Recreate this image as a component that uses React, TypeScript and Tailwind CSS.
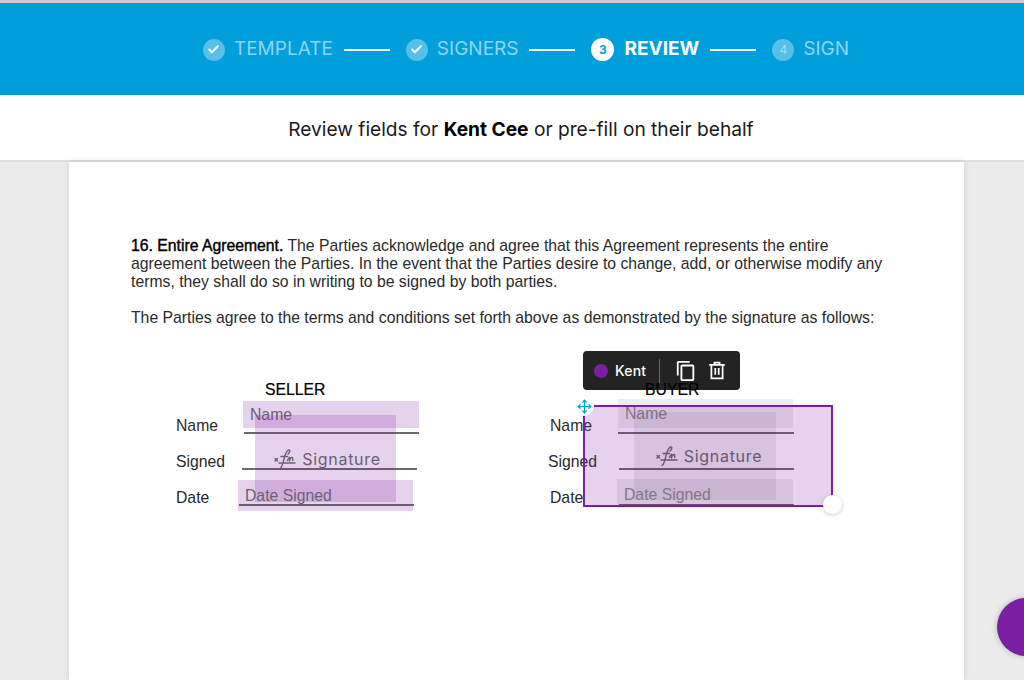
import React from 'react';
import { Check, Move } from 'lucide-react';
import { MdOutlineContentCopy } from 'react-icons/md';

const SignatureMark: React.FC<{ className?: string }> = ({ className }) => (
    <svg className={className} viewBox="0 0 22 20" fill="none" stroke="currentColor" strokeWidth="1.4" strokeLinecap="round">
        <path d="M1 9.500l2.500 2.500M3.500 9.500L1 12" />
        <path d="M6 19.500c2-1 2.500-4 4-9.500 1-4 2.500-9 5-9 1.500 0 1 2-1 4" />
        <path d="M7 7.500h6.500" />
        <path d="M13.500 11.500c.8-2 1.800-3.500 2.300-3 .5.500-.5 2.500-.3 3 .8-2 2-3.500 3-3 .7.500-.2 2.500.3 3" />
        <path d="M5 14h16" />
    </svg>
);

const BinIcon: React.FC<{ className?: string }> = ({ className }) => (
    <svg className={className} viewBox="0 0 20 22" fill="none" stroke="currentColor" strokeWidth="2">
        <path d="M1 4.500h18M7 4.500V2h6v2.500" />
        <path d="M3.500 4.500V20h13V4.500" />
        <path d="M8 8v8M12 8v8" />
    </svg>
);

interface StepProps {
    label: string;
    number?: number;
    done?: boolean;
    active?: boolean;
}

const Step: React.FC<StepProps> = ({ label, number, done, active }) => (
    <div className="flex items-center">
        {active ? (
            <span className="flex h-[23px] w-[23px] items-center justify-center rounded-full bg-white text-[12px] font-bold text-[#009fdb]">{number}</span>
        ) : (
            <span className="flex h-[22px] w-[22px] items-center justify-center rounded-full bg-[#58bfe8] text-[12px] text-[#a5def3]">
                {done ? <Check size={13} strokeWidth={3.5} className="text-white" /> : number}
            </span>
        )}
        <span className={active ? 'ml-[10px] text-[19px] font-bold text-white' : 'ml-[9px] text-[19px] text-[#8fd4ef]'}>{label}</span>
    </div>
);

const StepLine = () => <span className="ml-[11px] mr-[16px] h-[2px] w-[46px] bg-white" />;

const App: React.FC = () => {
    return (
        <div className="relative flex h-[680px] w-[1024px] flex-col overflow-hidden bg-[#ececec] font-['Inter',sans-serif]">
            <header className="flex h-[95px] shrink-0 items-center justify-center border-t-[3px] border-[#c9cdd0] bg-[#009fdb] pl-[28px] pt-[1px]">
                <Step label="TEMPLATE" done />
                <StepLine />
                <Step label="SIGNERS" done />
                <StepLine />
                <Step label="REVIEW" number={3} active />
                <StepLine />
                <Step label="SIGN" number={4} />
            </header>
            <div className="flex h-[67px] shrink-0 items-center justify-center border-b-2 border-[#dedede] bg-white pl-[18px] pt-[3px] text-[19.15px] text-[#1a1a1a]">
                <p>Review fields for <b className="font-bold text-black">Kent Cee</b> or pre-fill on their behalf</p>
            </div>

            <main className="ml-[69px] w-[895px] grow bg-white pl-[62px] pr-[80px] pt-[75px] font-['Liberation_Sans',sans-serif] text-[15.75px] leading-[18px] text-[#2a2a2a] shadow-[0_0_6px_rgba(0,0,0,0.12)]">
                <p>
                    <span className="text-black [-webkit-text-stroke:0.4px]">16. Entire Agreement.</span> The Parties acknowledge and agree that this Agreement represents the entire
                    agreement between the Parties. In the event that the Parties desire to change, add, or otherwise modify any
                    terms, they shall do so in writing to be signed by both parties.
                </p>
                <p className="mt-[18px] whitespace-nowrap">The Parties agree to the terms and conditions set forth above as demonstrated by the signature as follows:</p>

                <section className="ml-[45px] mt-[54px] flex">
                    {/* seller */}
                    <div className="relative w-[372px]">
                        <h3 className="ml-[89px] whitespace-nowrap text-black [-webkit-text-stroke:0.2px]">SELLER</h3>
                        <div className="flex h-[35px] items-end">
                            <span className="-mb-[1px] w-[68px]">Name</span>
                            <span className="h-[2px] w-[175px] bg-[#6a6a6a]" />
                        </div>
                        <div className="flex h-[36px] items-end">
                            <span className="-mb-[1px] w-[66px]">Signed</span>
                            <span className="h-[2px] w-[175px] bg-[#6a6a6a]" />
                        </div>
                        <div className="flex h-[36px] items-end">
                            <span className="-mb-[1px] w-[63px]">Date</span>
                            <span className="h-[2px] w-[175px] bg-[#6a6a6a]" />
                        </div>

                        <div className="absolute left-[67px] top-[20px] h-[27px] w-[176px] bg-[#7b1fa2]/20 pl-[7px] pt-[5px] text-[#6d5f73]">Name</div>
                        <div className="absolute left-[79px] top-[34px] flex h-[87px] w-[141px] items-center justify-center gap-[6px] bg-[#7b1fa2]/20 pl-[4px] pt-[1px] text-[#6d5f73]">
                            <SignatureMark className="h-[20px] w-[22px]" />
                            <span className="font-['Inter',sans-serif] text-[16px] tracking-[0.7px]">Signature</span>
                        </div>
                        <div className="absolute left-[62px] top-[99px] h-[31px] w-[175px] bg-[#7b1fa2]/20 pl-[7px] pt-[7px] text-[#6d5f73]">Date Signed</div>
                    </div>

                    {/* buyer */}
                    <div className="relative w-[300px]">
                        <div className="absolute left-[35px] top-[-30px] flex h-[39px] w-[157px] items-center rounded-[4px] bg-[#232323] pl-[11px] font-['Inter',sans-serif] text-[14px] text-white">
                            <span className="h-[14px] w-[14px] rounded-full bg-[#7b1fa2]" />
                            <span className="ml-[7px] w-[44px] font-medium tracking-[0.2px]">Kent</span>
                            <span className="h-[24px] w-[1px] bg-[#666]" />
                            <MdOutlineContentCopy size={22} className="ml-[15px]" />
                            <BinIcon className="ml-[11px] h-[19px] w-[18px]" />
                        </div>
                        <h3 className="relative ml-[97px] whitespace-nowrap text-black [-webkit-text-stroke:0.2px]">BUYER</h3>
                        <div className="ml-[2px] flex h-[35px] items-end">
                            <span className="-mb-[1px] w-[68px]">Name</span>
                            <span className="h-[2px] w-[176px] bg-[#6a6a6a]" />
                        </div>
                        <div className="flex h-[36px] items-end">
                            <span className="-mb-[1px] w-[71px]">Signed</span>
                            <span className="h-[2px] w-[175px] bg-[#6a6a6a]" />
                        </div>
                        <div className="ml-[2px] flex h-[36px] items-end">
                            <span className="-mb-[1px] w-[69px]">Date</span>
                            <span className="h-[2px] w-[175px] bg-[#6a6a6a]" />
                        </div>

                        <div className="absolute left-[70px] top-[18px] h-[29px] w-[175px] bg-black/[0.07] pl-[7px] pt-[6px] text-[#8a8a8a]">Name</div>
                        <div className="absolute left-[86px] top-[31px] flex h-[88px] w-[142px] items-center justify-center gap-[6px] bg-black/[0.07] pl-[8px] text-[#666]">
                            <SignatureMark className="h-[20px] w-[22px]" />
                            <span className="font-['Inter',sans-serif] text-[16px] tracking-[0.7px]">Signature</span>
                        </div>
                        <div className="absolute left-[69px] top-[98px] h-[29px] w-[176px] bg-black/[0.07] pl-[7px] pt-[7px] text-[#8a8a8a]">Date Signed</div>

                        {/* selected field */}
                        <div className="absolute left-[35px] top-[24px] h-[102px] w-[250px] border-2 border-[#7b1fa2] bg-[#7b1fa2]/20" />
                        <div className="absolute left-[26px] top-[15px] flex h-[20px] w-[20px] items-center justify-center rounded-full bg-white">
                            <Move size={15} strokeWidth={2} className="text-[#009fdb]" />
                        </div>
                        <div className="absolute left-[275px] top-[114px] h-[19px] w-[19px] rounded-full bg-white shadow-[0_1px_4px_rgba(0,0,0,0.2)]" />
                    </div>
                </section>
            </main>

            <div className="absolute left-[997px] top-[598px] h-[58px] w-[58px] rounded-full bg-[#7b1fa2] shadow-[0_0_6px_rgba(0,0,0,0.25)]" />
        </div>
    );
};

export default App;
